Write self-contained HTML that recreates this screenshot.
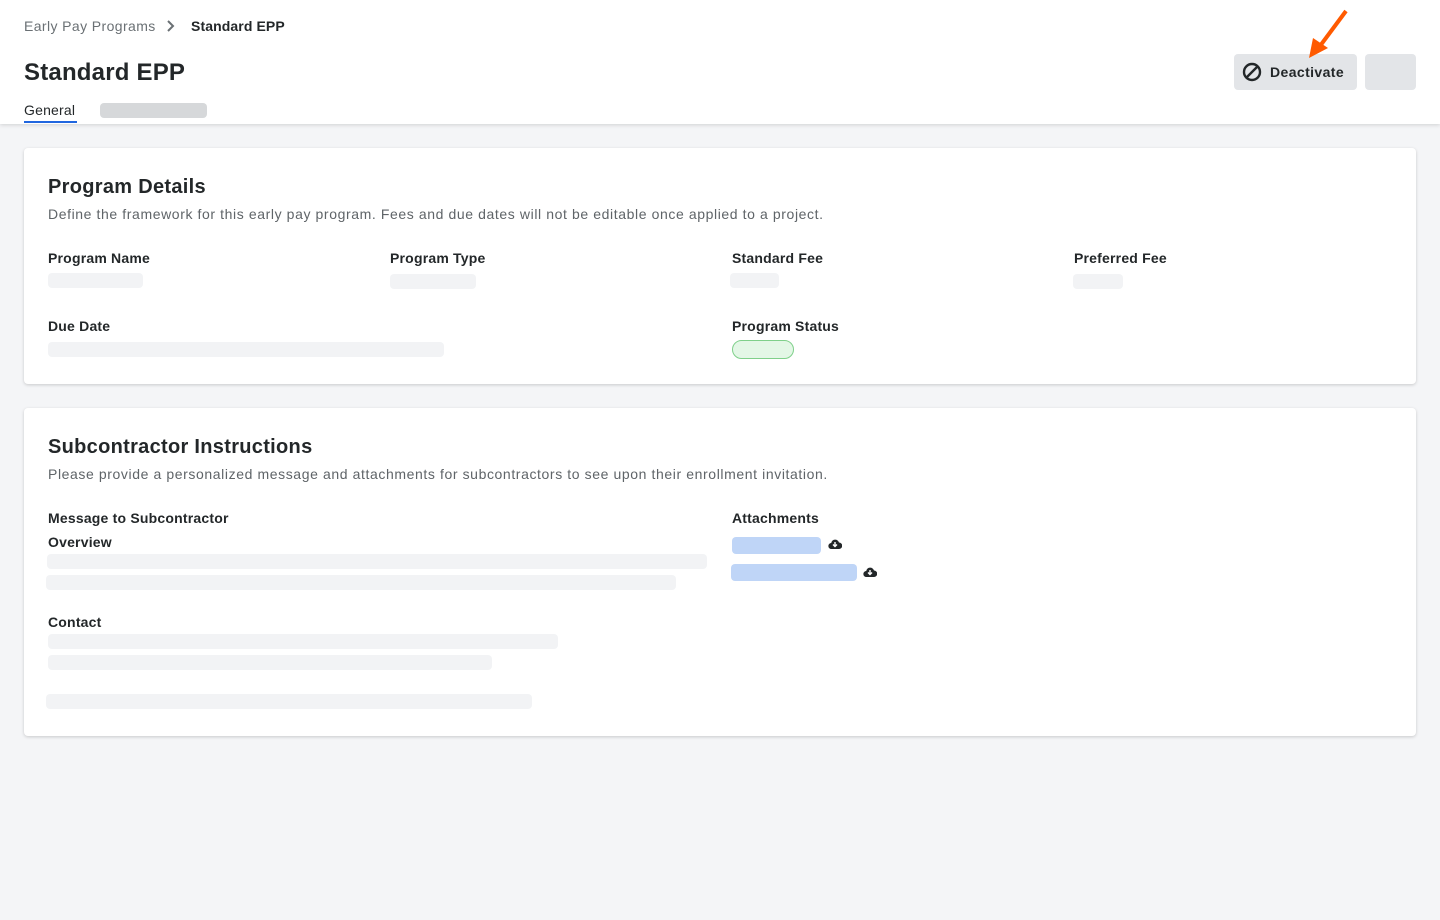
<!DOCTYPE html>
<html><head><meta charset="utf-8"><style>
*{margin:0;padding:0;box-sizing:border-box}
body{width:1440px;height:920px;background:#f4f5f7;font-family:"Liberation Sans",sans-serif;color:#232729;position:relative;overflow:hidden}
.a{position:absolute}
.hdr{left:0;top:0;width:1440px;height:124px;background:#fff;box-shadow:0 1px 4px rgba(0,0,0,.15)}
.card{background:#fff;left:24px;width:1392px;border-radius:4px;box-shadow:0 1px 3px rgba(0,0,0,.18)}
.sk{position:absolute;background:#f2f3f5;border-radius:4px;height:15px}
.lbl{position:absolute;font-size:14px;font-weight:bold;color:#232729;letter-spacing:.2px}
h2{position:absolute;font-size:20px;font-weight:bold;letter-spacing:.3px}
.d{position:absolute;font-size:14px;color:#5f6468;letter-spacing:.6px}
</style></head><body>
<div class="a hdr">
<div class="a" style="left:24px;top:18px;font-size:14px;color:#6a7074;letter-spacing:.4px">Early Pay Programs</div>
<svg class="a" style="left:165px;top:19px" width="12" height="14" viewBox="0 0 12 14"><path d="M3 2l5 5-5 5" fill="none" stroke="#6a7074" stroke-width="2"/></svg>
<div class="a" style="left:191px;top:18px;font-size:14px;font-weight:bold;letter-spacing:.1px">Standard EPP</div>
<div class="a" style="left:24px;top:59px;font-size:24px;font-weight:bold;letter-spacing:.2px">Standard EPP</div>
<div class="a" style="left:24px;top:102px;font-size:14px;letter-spacing:.2px">General</div>
<div class="a" style="left:24px;top:121px;width:53px;height:2px;background:#2066df"></div>
<div class="a" style="left:100px;top:103px;width:107px;height:15px;background:#d6d8da;border-radius:4px"></div>
<div class="a" style="left:1234px;top:54px;width:123px;height:36px;background:#e3e5e8;border-radius:4px"></div>
<svg class="a" style="left:1242px;top:62px" width="20" height="20" viewBox="0 0 20 20"><circle cx="10" cy="10" r="8" fill="none" stroke="#232729" stroke-width="2.4"/><path d="M5 15L15 5" stroke="#232729" stroke-width="2.4"/></svg>
<div class="a" style="left:1270px;top:64px;font-size:14px;font-weight:bold;letter-spacing:.4px">Deactivate</div>
<div class="a" style="left:1365px;top:54px;width:51px;height:36px;background:#e3e5e8;border-radius:4px"></div>
<svg class="a" style="left:1300px;top:8px" width="50" height="52" viewBox="0 0 50 52"><path d="M46 3L20 38" stroke="#ff5a00" stroke-width="4"/><path d="M9 50l4-20 15 10z" fill="#ff5a00"/></svg>
</div>
<div class="a card" style="top:148px;height:236px">
<h2 style="left:24px;top:28px">Program Details</h2>
<div class="d" style="left:24px;top:58px">Define the framework for this early pay program. Fees and due dates will not be editable once applied to a project.</div>
<div class="lbl" style="left:24px;top:102px">Program Name</div><div class="sk" style="left:24px;top:125px;width:95px"></div>
<div class="lbl" style="left:366px;top:102px">Program Type</div><div class="sk" style="left:366px;top:126px;width:86px"></div>
<div class="lbl" style="left:708px;top:102px">Standard Fee</div><div class="sk" style="left:706px;top:125px;width:49px"></div>
<div class="lbl" style="left:1050px;top:102px">Preferred Fee</div><div class="sk" style="left:1049px;top:126px;width:50px"></div>
<div class="lbl" style="left:24px;top:170px">Due Date</div><div class="sk" style="left:24px;top:194px;width:396px"></div>
<div class="lbl" style="left:708px;top:170px">Program Status</div>
<div class="a" style="left:708px;top:192px;width:62px;height:19px;border-radius:10px;background:#e3f7e6;border:1px solid #7fd08a"></div>
</div>
<div class="a card" style="top:408px;height:328px">
<h2 style="left:24px;top:28px">Subcontractor Instructions</h2>
<div class="d" style="left:24px;top:58px">Please provide a personalized message and attachments for subcontractors to see upon their enrollment invitation.</div>
<div class="lbl" style="left:24px;top:102px">Message to Subcontractor</div>
<div class="lbl" style="left:24px;top:126px">Overview</div>
<div class="sk" style="left:23px;top:146px;width:660px"></div>
<div class="sk" style="left:22px;top:167px;width:630px"></div>
<div class="lbl" style="left:24px;top:206px">Contact</div>
<div class="sk" style="left:24px;top:226px;width:510px"></div>
<div class="sk" style="left:24px;top:247px;width:444px"></div>
<div class="sk" style="left:22px;top:286px;width:486px"></div>
<div class="lbl" style="left:708px;top:102px">Attachments</div>
<div class="sk" style="left:708px;top:129px;width:89px;height:17px;background:#bfd5f7"></div>
<svg class="a" style="left:804px;top:130px" width="14" height="12" viewBox="0 0 14 12"><path d="M3.5 11a3 3 0 0 1-.3-6A4 4 0 0 1 11 4.5a3.2 3.2 0 0 1 0 6.5z" fill="#232729"/><path d="M7 4v4M5 6.5L7 8.5 9 6.5" stroke="#fff" stroke-width="1.4" fill="none"/></svg>
<div class="sk" style="left:707px;top:156px;width:126px;height:17px;background:#bfd5f7"></div>
<svg class="a" style="left:839px;top:158px" width="14" height="12" viewBox="0 0 14 12"><path d="M3.5 11a3 3 0 0 1-.3-6A4 4 0 0 1 11 4.5a3.2 3.2 0 0 1 0 6.5z" fill="#232729"/><path d="M7 4v4M5 6.5L7 8.5 9 6.5" stroke="#fff" stroke-width="1.4" fill="none"/></svg>
</div>
</body></html>
